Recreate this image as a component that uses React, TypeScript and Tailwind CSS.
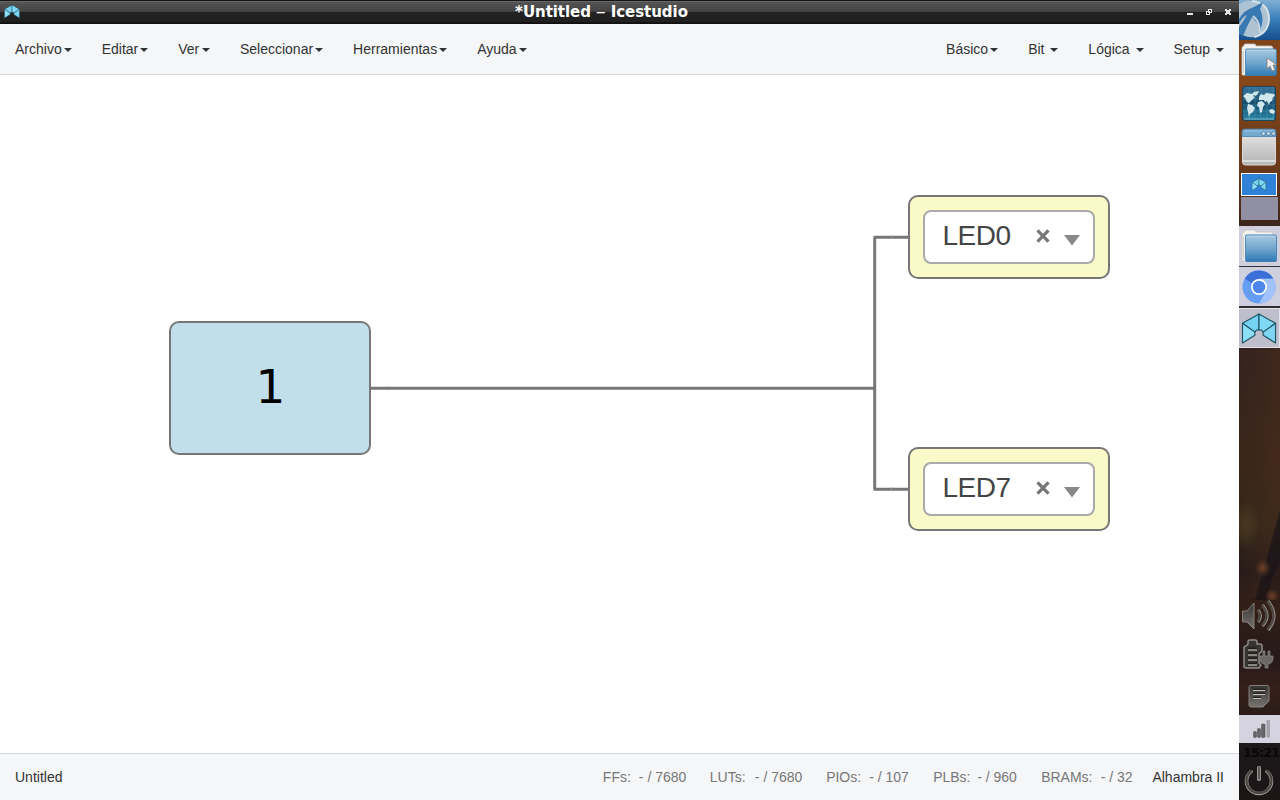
import React from 'react';

const leftMenus = ['Archivo', 'Editar', 'Ver', 'Seleccionar', 'Herramientas', 'Ayuda'];
const rightMenus = ['Básico', 'Bit ', 'Lógica ', 'Setup '];
const stats = [
  { name: 'FFs:', value: '- / 7680', nameWidth: 'w-9', valueWidth: 'w-[71px]' },
  { name: 'LUTs:', value: '- / 7680', nameWidth: 'w-[45px]', valueWidth: 'w-[71.3px]' },
  { name: 'PIOs:', value: '- / 107', nameWidth: 'w-[43px]', valueWidth: 'w-16' },
  { name: 'PLBs:', value: '- / 960', nameWidth: 'w-11', valueWidth: 'w-16' },
  { name: 'BRAMs:', value: '- / 32', nameWidth: 'w-[59.6px]', valueWidth: 'w-[51.7px]' },
];

function Caret() {
  return (
    <span className="ml-[2px] mt-px h-0 w-0 border-x-4 border-t-4 border-x-transparent border-t-[#333]" />
  );
}

function Menu({ label }: { label: string }) {
  return (
    <div className="flex h-[50px] items-center px-[15px] whitespace-pre">
      <span className={label === 'Ver' ? 'w-[21.7px]' : ''}>{label}</span>
      <Caret />
    </div>
  );
}

function IceLogo({ className }: { className: string }) {
  return (
    <svg className={className} viewBox="0 0 34 30" stroke="#1d5263" strokeWidth="1.1" strokeLinejoin="round">
      <path d="M1 10 17 1v15.500h-2.500L13 18.500z" fill="#76d2f1" />
      <path d="M33 10 17 1v15.500h2.500l1.500 2z" fill="#7fd8f4" />
      <path d="M1 10l12 8.500v3L1 29z" fill="#8be0f8" />
      <path d="M33 10l-12 8.500v3L33 29z" fill="#7fd6f2" />
    </svg>
  );
}

function TitleBar() {
  return (
    <div className="flex h-6 shrink-0 items-center border-b border-[#101010] bg-[linear-gradient(#151515_0px,#151515_1px,#777_1px,#555_2px,#414141_12px,#222_12px,#202020_22px,#141414_22px)] pr-[7px] pl-1">
      <IceLogo className="h-[15px] w-4" />
      <div className="mt-px flex-1 pr-[3px] text-center font-['DejaVu_Sans',sans-serif] text-[15px] leading-[23px] font-bold tracking-[-0.05px] text-white">
        *Untitled <span className="font-normal">‒</span> Icestudio
      </div>
      <svg className="mt-px h-[8px] w-[46px]" viewBox="0 0 46 8" shapeRendering="crispEdges">
        <path d="M1 5h6v2H1z" fill="#e6e6e6" />
        <path d="M22.500 1.500h3v3h-3zM20.500 3.500h3v3h-3z" fill="none" stroke="#e6e6e6" />
        <path d="M39 1h2v1h2V1h2v2h-1v2h1v2h-2V6h-2v1h-2V5h1V3h-1z" fill="#e6e6e6" />
      </svg>
    </div>
  );
}

function Pin({ label, position }: { label: string; position: string }) {
  return (
    <div className={`absolute left-[908px] h-[84px] w-[202px] rounded-[10px] border-2 border-[#777] bg-[#fafac8] p-[13px] ${position}`}>
      <div className="flex h-[54px] w-[172px] items-center rounded-[8px] border-2 border-[#aaa] bg-white pl-[17.5px] text-[#444]">
        <span className="mb-[2px] w-[93.5px] text-[28px] leading-[50px] tracking-[-0.45px]">{label}</span>
        <svg className="mb-[2px] h-[14px] w-[14px]" viewBox="0 0 14 14">
          <path d="M1.500 1.300 12.500 12.700M12.500 1.300 1.500 12.700" stroke="#777" strokeWidth="3.200" />
        </svg>
        <svg className="mt-[6px] ml-[13.5px] h-[11px] w-4 shrink-0" viewBox="0 0 16 11">
          <path d="M0 0h16L8 10.500z" fill="#888" />
        </svg>
      </div>
    </div>
  );
}

function Canvas() {
  return (
    <main className="relative min-h-0 flex-1 overflow-hidden bg-white">
      <svg className="absolute inset-0 h-full w-full" viewBox="0 0 1239 678" fill="none" stroke="#777" strokeWidth="3">
        <path d="M370 313.300H874.700M909 162.300H874.700V414.300H909" strokeLinejoin="round" />
        <path d="M387.500 311v1M891.500 160v4M891.500 412v4" stroke="#aaa" strokeWidth=".6" />
      </svg>
      <div className="absolute top-[246px] left-[169px] flex h-[134px] w-[202px] items-center justify-center rounded-[10px] border-2 border-[#777] bg-[#c0dfea] font-['DejaVu_Sans',sans-serif] text-[47px] text-black">
        <span className="mb-[2px] pl-px">1</span>
      </div>
      <Pin label="LED0" position="top-[120px]" />
      <Pin label="LED7" position="top-[372px]" />
    </main>
  );
}

function FolderIcon() {
  return (
    <svg className="h-[40px] w-[41px] shrink-0" viewBox="0 0 41 40">
      <path d="M3 8q0-2 2-2V5q0-1 2-1h8q2 0 2 2h15q2 0 2 3v26H3z" fill="#f3f3f2" stroke="#c4c4c4" strokeWidth=".8" />
      <path d="M5 9h28" stroke="#d5d5d5" />
      <path d="M4.500 11v22" stroke="#cfcfcf" />
      <rect x="6.500" y="9" width="31" height="26.500" rx="1.500" fill="url(#folder-face)" stroke="#397aac" strokeWidth=".8" />
      <path d="M8 10.300h28" stroke="#bad5e9" />
    </svg>
  );
}

function LauncherIcons() {
  return (
    <>
      <svg className="h-10 w-[41px] shrink-0" viewBox="0 0 41 40">
        <path d="M0 0h41v40H0z" fill="url(#launcher)" />
        <path d="M0 4Q7 0 13 1q17 2 17 18-1 15-15 18Q7 38 0 33z" fill="#adc2d2" />
        <path d="M13 1q17 2 17 18-1 15-15 18" fill="none" stroke="#d5e2ea" strokeWidth="2" />
        <path d="M0 19Q5 10 15 7l9-5-3 7q5 10 0 22-2-9-8-14Q8 26 4 36l-4-3 0-6q4-5 8-12-5 2-8 9z" fill="#3979b2" />
        <path d="M14 16q7 5 7 17" fill="none" stroke="#cad7df" strokeWidth="2" />
      </svg>
      <div className="relative h-[43px] shrink-0">
        <FolderIcon />
        <svg className="absolute top-[17px] left-[27px] h-[15px] w-[11px]" viewBox="0 0 11 15">
          <path d="M1 1v11l3-3 2 5 3-1-2-5h4z" fill="#eee" stroke="#81786f" strokeWidth=".8" />
        </svg>
      </div>
      <svg className="h-[43px] w-[41px] shrink-0" viewBox="0 0 41 43">
        <rect x="3.500" y="3.500" width="33" height="34" rx="3" fill="url(#globe)" stroke="#21455c" strokeWidth="1.200" />
        <path d="M4 10h32M4 16h32M4 22h32M4 28h32M10 4v33M16 4v33M22 4v33M28 4v33M34 4v33" stroke="#4f9eb8" strokeOpacity=".55" strokeWidth=".7" />
        <path d="M4 13l4-3 5 1 2-2 2 2-3 2 2 1-4 4-2 2-2-1-2-4zM9 21l4 1 3 3-2 4-3 2-1 3-1-5-1-4zM15 9l5-1-2 4-2 1zM20 14l2-3 3 1 2-2 8 1 1 2-2 1-1 4-2 1-1 3-2-4-2 1-1-2-5 0zM19 19l4-1 3 3-2 3-1 5-2 1-1-6-2-1zM30 27l3-1 3 2-1 3-4-1z" fill="#d0e8eb" />
        <path d="M5 36h30" stroke="#7ab0c1" />
      </svg>
      <svg className="h-[47px] w-[41px] shrink-0" viewBox="0 0 41 47">
        <rect x="3.500" y="4" width="33" height="35" rx="3" fill="url(#window-face)" stroke="#dad9d6" />
        <path d="M3 10.500V6q0-3 3-3h28q3 0 3 3v4.500z" fill="#75a8cf" stroke="#477fac" strokeWidth=".8" />
        <path d="M5 5h30" stroke="#a4c5e2" />
        <path d="M23 6h3v3h-3zM28 6h3v3h-3zM33 6h3v3h-3z" fill="#e5f2fb" stroke="#38658c" strokeWidth=".6" />
        <path d="M4 35h32" stroke="#fff" />
        <path d="M4 37h32" stroke="#bbb" />
      </svg>
      <div className="ml-[2px] flex h-[53px] w-9 shrink-0 flex-col">
        <div className="flex h-[23px] shrink-0 items-center justify-center border border-white bg-[#2f82d8]">
          <IceLogo className="h-[13px] w-4" />
        </div>
        <div className="mt-px h-[23px] w-[37px] shrink-0 bg-[#9190a2]" />
      </div>
    </>
  );
}

function TaskButtons() {
  return (
    <>
      <div className="h-[41px] shrink-0 border-b border-[#34323b] bg-[#d0cfdd]">
        <FolderIcon />
      </div>
      <div className="flex h-[41px] shrink-0 items-center border-b-2 border-[#302a31] bg-[#d0cfdd] pl-[3px]">
        <svg className="h-[34px] w-[34px]" viewBox="0 0 34 34">
          <circle cx="17" cy="17" r="16.500" fill="#669df6" />
          <path d="M17 17 2.700 8.800A16.500 16.500 0 0 1 31.300 8.700H17z" fill="#3b6fd8" />
          <path d="M17 8.700h14.300A16.500 16.500 0 0 1 17 33.500l7.200-12.400z" fill="#a1c2fa" />
          <circle cx="17" cy="17" r="8" fill="#fff" />
          <circle cx="17" cy="17" r="6.300" fill="#4e86ee" />
        </svg>
      </div>
      <div className="flex h-[40px] shrink-0 items-center border border-l-0 border-[#e4e2eb] bg-[#bfbecc] pl-[2px]">
        <IceLogo className="h-[31px] w-[36px]" />
      </div>
    </>
  );
}

function Tray() {
  return (
    <>
      <svg className="h-[115px] w-[41px] shrink-0" viewBox="0 600 41 115" fill="none">
        <path d="M3.500 611h4.500l7-8v26l-7-7H3.500z" fill="url(#tray)" stroke="#99928e" strokeWidth=".8" />
        <g strokeLinecap="butt">
          <path d="M19 610q5 6 0 12M23.500 605q9 11 0 21M29 601q12 15 0 29" stroke="#a49d98" strokeWidth="3" />
          <path d="M18.500 610q5 6 0 11.500M23 605q9 11 0 20.500M28.500 601q12 15 0 28.500" stroke="#4d4641" strokeWidth="2.300" />
        </g>
        <path d="M9 644v-2q0-2 2-2h5q2 0 2 2v2h3q2 0 2 2v5l-3 3v9l2 2-2 3H7q-2 0-2-2v-18q0-2 2-2z" fill="#373432" stroke="#8f8a86" strokeWidth="1.500" />
        <path d="M9 649h9M9 654h9M9 659h9M9 664h9" stroke="#211d1b" strokeWidth="3" />
        <path d="M9 650h9M9 655h9M9 660h9M9 665h9" stroke="#aaa6a2" strokeWidth="1.300" />
        <path d="M21 656h3v-5h2v5h3v-5h2v5h3v3q-1 5-5 5v4h-3v-4q-5 0-5-5z" fill="#6b6866" stroke="#8c8885" strokeWidth=".7" />
        <path d="M11 685.500h17q2 0 2 2V701l-6 6H12q-2 0-2-2v-17q0-2.500 1-2.500z" fill="url(#tray)" stroke="#858079" />
        <path d="M14 689.500h12M14 693.500h12M14 697.500h8" stroke="#252221" strokeWidth="2" />
        <path d="M14 690.500h12M14 694.500h12M14 698.500h8" stroke="#c4c0ba" strokeWidth="1.100" />
      </svg>
      <div className="h-7 shrink-0 bg-[#d4d3df]">
        <svg className="h-7 w-[41px]" viewBox="0 0 41 28">
          <g fill="#666669" stroke="#444" strokeWidth=".5">
            <rect x="14.500" y="16.500" width="3" height="6" rx="1" />
            <rect x="18.500" y="13.500" width="3" height="9" rx="1" />
            <rect x="22.500" y="9" width="3.500" height="13.500" rx="1" />
          </g>
          <rect x="27.500" y="5" width="3.500" height="17.500" rx="1" fill="#a4a3a9" />
        </svg>
      </div>
      <div className="h-[18px] shrink-0 pl-[4px] font-['DejaVu_Sans',sans-serif] text-[13px] leading-[19px] font-bold tracking-[-1.05px] whitespace-nowrap text-[#080606]">
        15:21
      </div>
      <svg className="h-[39px] w-[41px] shrink-0" viewBox="0 761 41 39" fill="none" strokeLinecap="round">
        <path d="M12 771.500a12.500 12.500 0 1 0 16 0" stroke="#aaa7a4" strokeWidth="3.500" />
        <path d="M12 771a12.500 12.500 0 1 0 16 0" stroke="#4c4844" strokeWidth="2.400" />
        <path d="M20 768v11" stroke="#aaa" strokeWidth="4" />
        <path d="M20 768v10.500" stroke="#5c5854" strokeWidth="2.500" />
      </svg>
    </>
  );
}

function Dock() {
  return (
    <aside className="relative flex h-[800px] w-[41px] shrink-0 flex-col overflow-hidden bg-[linear-gradient(#784018_0px,#874719_80px,#744019_125px,#6c3a1b_165px,#3b251c_225px,#34231e_350px,#392519_460px,#35281a_525px,#281b19_570px,#332017_610px,#25191a_655px,#362019_690px,#1c1719_745px,#1b1516_800px)]">
      <svg className="absolute h-0 w-0">
        <defs>
          <linearGradient id="folder-face" x2="0" y2="1"><stop stopColor="#a9cae2" /><stop offset=".55" stopColor="#6da3cc" /><stop offset="1" stopColor="#2c7bb4" /></linearGradient>
          <linearGradient id="launcher" x2="0" y2="1"><stop stopColor="#81afd3" /><stop offset=".5" stopColor="#377db8" /><stop offset="1" stopColor="#174f8d" /></linearGradient>
          <linearGradient id="globe" x2="0" y2="1"><stop stopColor="#39739a" /><stop offset=".5" stopColor="#184d6d" /><stop offset="1" stopColor="#2c88a8" /></linearGradient>
          <linearGradient id="window-face" x2="0" y2="1"><stop stopColor="#e8e8e7" /><stop offset="1" stopColor="#b3b3b3" /></linearGradient>
          <linearGradient id="tray" x2="0" y2="1"><stop stopColor="#353331" /><stop offset="1" stopColor="#777471" /></linearGradient>
          <radialGradient id="ember"><stop stopColor="#8c512e" stopOpacity=".65" /><stop offset="1" stopColor="#8c512e" stopOpacity="0" /></radialGradient>
          <radialGradient id="moss"><stop stopColor="#655029" stopOpacity=".4" /><stop offset="1" stopColor="#655029" stopOpacity="0" /></radialGradient>
          <linearGradient id="warm"><stop stopColor="#4b3020" stopOpacity="0" /><stop offset="1" stopColor="#55301b" stopOpacity=".35" /></linearGradient>
        </defs>
      </svg>
      <LauncherIcons />
      <TaskButtons />
      <svg className="h-[252px] w-[41px] shrink-0" viewBox="0 348 41 252">
        <path d="M0 348h41v170L20 598H0z" fill="url(#warm)" />
        <path d="M41 510Q30 550 16 600h12q3-22 13-37z" fill="#181319" opacity=".65" />
        <ellipse cx="7" cy="525" rx="14" ry="25" fill="url(#moss)" />
        <ellipse cx="24" cy="568" rx="8" ry="9" fill="url(#ember)" />
        <ellipse cx="33" cy="596" rx="7" ry="7" fill="url(#ember)" />
      </svg>
      <Tray />
    </aside>
  );
}

export default function App() {
  return (
    <div className="flex h-[800px] w-[1280px] overflow-hidden font-['Liberation_Sans',Arial,sans-serif] text-[14px] text-[#333]">
      <div className="flex min-w-0 flex-1 flex-col">
        <TitleBar />
        <nav className="flex h-[51px] shrink-0 justify-between border-b border-[#d3d7db] bg-[#f5f6f8]">
          <div className="flex">{leftMenus.map((label) => <Menu key={label} label={label} />)}</div>
          <div className="flex">{rightMenus.map((label) => <Menu key={label} label={label} />)}</div>
        </nav>
        <Canvas />
        <footer className="flex h-[47px] shrink-0 items-center justify-between border-t border-[#d3d7db] bg-[#f5f6f8] px-[15px]">
          <span>Untitled</span>
          <div className="flex">
            <div className="flex text-[#777]">
              {stats.map((stat) => (
                <div key={stat.name} className="flex">
                  <span className={stat.nameWidth}>{stat.name}</span>
                  <span className={stat.valueWidth}>{stat.value}</span>
                </div>
              ))}
            </div>
            <span>Alhambra II</span>
          </div>
        </footer>
      </div>
      <Dock />
    </div>
  );
}
